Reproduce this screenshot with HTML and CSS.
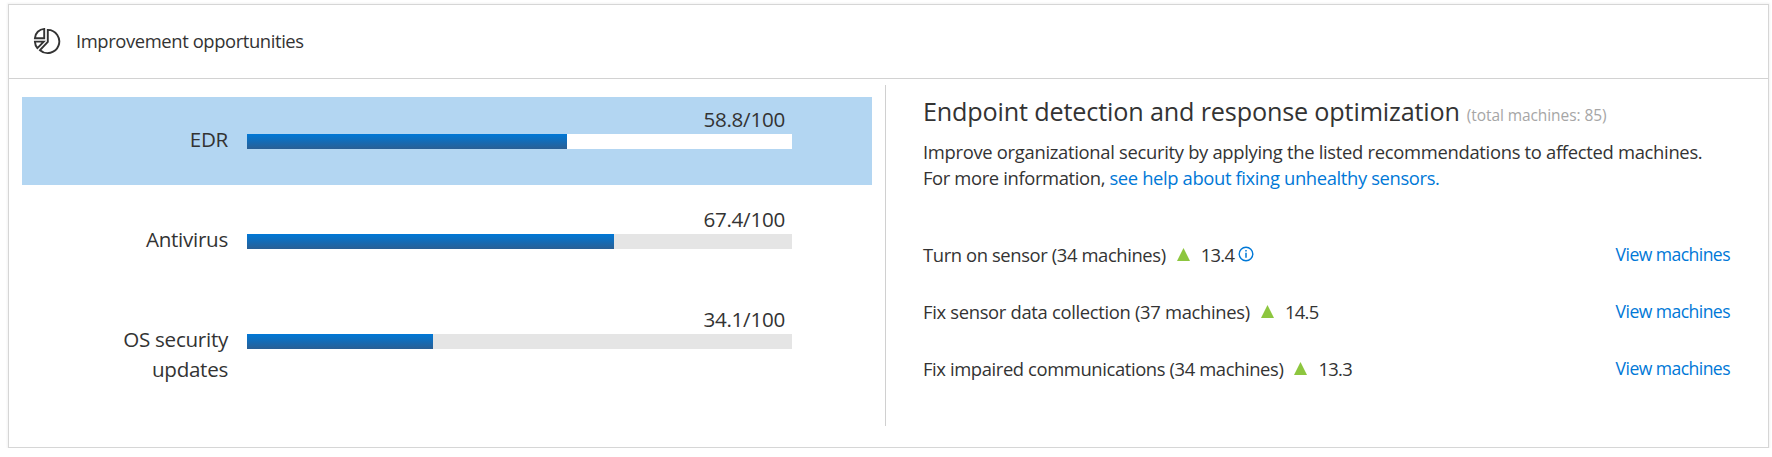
FILE: index.html
```html
<!DOCTYPE html>
<html lang="en">
<head>
<meta charset="utf-8">
<title>Improvement opportunities</title>
<link rel="stylesheet" href="styles.css">
</head>
<body>
<section class="card">
  <header class="card-header">
    <svg class="pie-icon" viewBox="0 0 28 28" fill="none" stroke="#333" stroke-width="1.9">
      <path d="M11.2 1.9V11.2H1.9A9.8 9.8 0 0 1 11.2 1.9Z"/>
      <path d="M14.8 2.9A11.6 11.6 0 1 1 7 23.2L14.8 14.9Z"/>
      <path d="M1.9 14.6H10.7L4.4 21.1A11 11 0 0 1 1.9 14.6Z"/>
    </svg>
    <h1 class="card-title">Improvement opportunities</h1>
  </header>
  <div class="card-body">
    <div class="scores">
      <div class="score selected">
        <div class="score-label">EDR</div>
        <div class="score-chart"><div class="score-value">58.8/100</div><div class="track"><div class="fill" style="width:58.8%"></div></div></div>
      </div>
      <div class="score">
        <div class="score-label">Antivirus</div>
        <div class="score-chart"><div class="score-value">67.4/100</div><div class="track"><div class="fill" style="width:67.4%"></div></div></div>
      </div>
      <div class="score">
        <div class="score-label">OS security updates</div>
        <div class="score-chart"><div class="score-value">34.1/100</div><div class="track"><div class="fill" style="width:34.1%"></div></div></div>
      </div>
    </div>
    <div class="details">
      <div class="heading"><h2 class="heading-text">Endpoint detection and response optimization</h2><span class="total">(total machines: 85)</span></div>
      <p class="description">Improve organizational security by applying the listed recommendations to affected machines.<br><span class="more">For more information, <a class="link">see help about fixing unhealthy sensors.</a></span></p>
      <div class="actions">
        <div class="action"><span class="action-name">Turn on sensor (34 machines)</span><svg class="up" viewBox="0 0 13 13"><path d="M6.5 0L13 13H0Z"/></svg><span class="gain">13.4</span>
          <svg class="info" viewBox="0 0 16 16" fill="none" stroke="#0078d7"><circle cx="8" cy="8" r="6.8" stroke-width="1.4"/><path d="M8 6.8V11.8M8 4V5.5" stroke-width="1.5"/></svg>
          <a class="link view">View machines</a></div>
        <div class="action"><span class="action-name collect">Fix sensor data collection (37 machines)</span><svg class="up" viewBox="0 0 13 13"><path d="M6.5 0L13 13H0Z"/></svg><span class="gain">14.5</span><a class="link view">View machines</a></div>
        <div class="action"><span class="action-name">Fix impaired communications (34 machines)</span><svg class="up" viewBox="0 0 13 13"><path d="M6.5 0L13 13H0Z"/></svg><span class="gain">13.3</span><a class="link view">View machines</a></div>
      </div>
    </div>
  </div>
</section>
</body>
</html>
```
FILE: styles.css
```css
* { box-sizing: border-box; }
body {
  margin: 0;
  padding: 4px 3px 0 8px;
  background: #fff;
  color: #333;
  font-family: "Open Sans", "Noto Sans", sans-serif;
  font-size: 18.4px;
}
h1, h2, p { margin: 0; font-weight: 400; }
.card {
  height: 444px;
  border: 1px solid #d6d6d6;
  box-shadow: 0 0 2px 1px #f3f3f3;
}
.card-header {
  display: flex;
  align-items: center;
  height: 74px;
  padding: 0 0 0 24px;
  border-bottom: 1px solid #d2d2d2;
}
.pie-icon { width: 28px; height: 28px; margin: 0 15px 2px 0; }
.card-title { padding-bottom: 2px; font-size: 18.4px; line-height: 28px; letter-spacing: -0.4px; white-space: nowrap; }
.card-body { display: flex; padding-top: 6px; }
.scores {
  width: 877px;
  height: 341px;
  padding: 12px 13px 0;
  border-right: 1px solid #d0d0d0;
}
.score { display: flex; height: 88px; margin-bottom: 12px; }
.selected { background: #b3d6f2; }
.score-label {
  width: 206px;
  padding: 27px 0 0 90px;
  text-align: right;
  font-size: 20.6px;
  line-height: 30px;
  letter-spacing: -0.28px;
}
.score-chart { width: 545px; margin-left: 19px; padding-top: 7px; }
.score-value {
  height: 30px;
  padding-right: 7px;
  text-align: right;
  font-size: 20.6px;
  line-height: 30px;
  letter-spacing: -0.25px;
}
.track { height: 15px; background: #e5e5e5; }
.selected .track { background: #fff; }
.fill { height: 15px; background: linear-gradient(#0078d7, #2a5f94); }
.details { flex: 1; padding: 8px 38px 0 37px; }
.heading { display: flex; align-items: baseline; height: 46px; white-space: nowrap; }
.heading-text { font-size: 25.2px; line-height: 36px; letter-spacing: -0.16px; }
.total { margin-left: 7px; color: #a6a6a6; font-size: 15.5px; letter-spacing: -0.08px; }
.description { line-height: 26px; height: 87px; white-space: nowrap; letter-spacing: -0.305px; }
.more { letter-spacing: -0.37px; }
.link { color: #0078d7; }
.action { display: flex; align-items: center; height: 57px; white-space: nowrap; letter-spacing: -0.39px; }
.collect { letter-spacing: -0.32px; }
.up { width: 13px; height: 13px; margin: 0 11px 1px 11px; fill: #8dc63f; }
.gain { letter-spacing: -0.7px; }
.info { width: 16px; height: 16px; margin: 0 0 1px 4px; }
.view { margin-left: auto; padding-bottom: 2px; font-size: 17.6px; letter-spacing: -0.57px; }
```
